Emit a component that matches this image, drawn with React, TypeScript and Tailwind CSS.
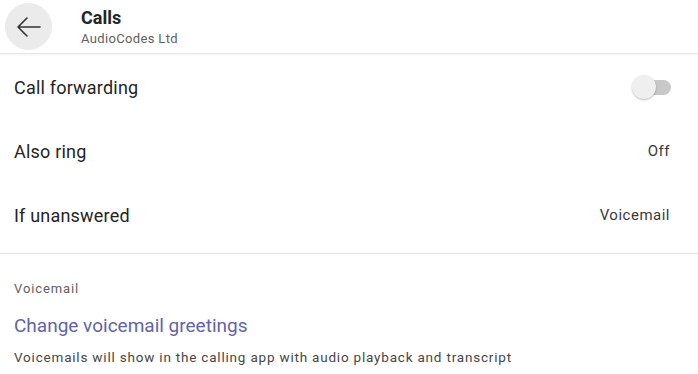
const rows = [
  { label: 'Call forwarding', value: null },
  { label: 'Also ring', value: 'Off' },
  { label: 'If unanswered', value: 'Voicemail' },
];

const Toggle = () => (
  <div className="relative w-[40px] h-[24px] flex items-center">
    <div className="ml-[14px] w-[25px] h-[15px] rounded-full bg-[#c8c8c8]" />
    <div className="absolute left-0 top-0 w-[24px] h-[24px] rounded-full bg-[#efefef] shadow-[0_1px_2px_rgba(0,0,0,0.25)]" />
  </div>
);

export default function App() {
  return (
    <div
      className="w-[698px] h-[374px] bg-white overflow-hidden text-[#252423]"
      style={{ fontFamily: 'Roboto, "Liberation Sans", sans-serif' }}
    >
      {/* Header */}
      <div className="h-[54px] flex items-center border-b border-[#e6e6e6] shadow-[0_1px_2px_rgba(0,0,0,0.05)]">
        <div className="ml-[5px] w-[47px] h-[47px] rounded-full bg-[#ebebeb] flex items-center justify-center">
          <svg width="26" height="22" viewBox="0 0 26 22" fill="none" stroke="#333" strokeWidth="1.6" strokeLinecap="round" strokeLinejoin="round">
            <path d="M24 11H2M11 2L2 11L11 20" />
          </svg>
        </div>
        <div className="ml-[29px] flex flex-col">
          <div className="text-[18px] font-bold leading-[22px] text-[#242424] mt-[1px]">Calls</div>
          <div className="text-[13px] tracking-[0.35px] leading-[18px] text-[#616161] mt-[1px]">AudioCodes Ltd</div>
        </div>
      </div>

      {/* Rows */}
      <div className="border-b border-[#e1e1e1] pb-[6px]">
        {rows.map((row) => (
          <div key={row.label} className="h-[64px] px-[14px] flex items-center justify-between first:mt-[1px]">
            <span className="text-[18px] tracking-[0.2px] text-[#252423]">{row.label}</span>
            {row.value === null ? (
              <div className="mr-[12px]">
                <Toggle />
              </div>
            ) : (
              <span className="text-[15px] tracking-[0.5px] text-[#3a3a3a] mr-[14px]">{row.value}</span>
            )}
          </div>
        ))}
      </div>

      {/* Voicemail */}
      <div className="px-[14px] pt-[26px]">
        <div className="text-[13px] tracking-[0.9px] text-[#616161] leading-[18px]">Voicemail</div>
        <div className="mt-[16px] text-[19px] text-[#6264a7] leading-[24px]">Change voicemail greetings</div>
        <div className="mt-[10px] text-[13.5px] tracking-[0.8px] text-[#484644] leading-[18px]">
          Voicemails will show in the calling app with audio playback and transcript
        </div>
      </div>
    </div>
  );
}
